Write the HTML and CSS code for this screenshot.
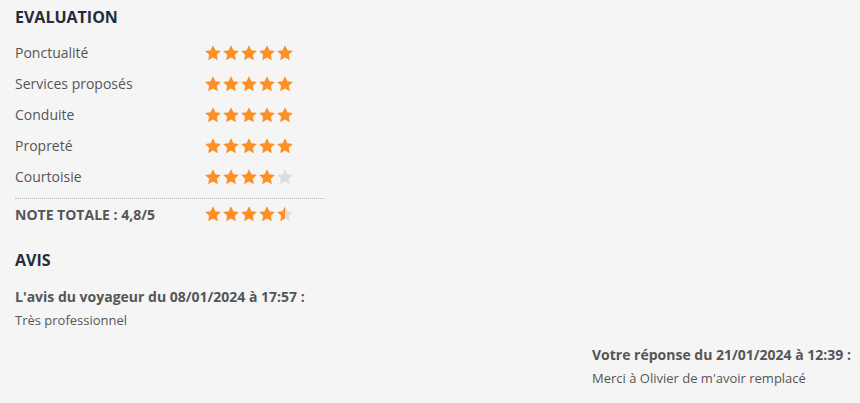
FILE: index.html
```html
<!DOCTYPE html>
<html lang="fr">
<head>
    <meta charset="UTF-8">
    <meta name="viewport" content="width=device-width, initial-scale=1.0">
    <title>Evaluation</title>
    <link rel="stylesheet" href="styles.css">
</head>
<body>

<svg width="0" height="0" class="defs">
    <defs>
        <linearGradient id="half">
            <stop offset="50%" stop-color="#fc8f25"/>
            <stop offset="50%" stop-color="#dddddd"/>
        </linearGradient>
        <symbol id="star" viewBox="0 0 24 24">
            <polygon points="12,1.5 15.2,8.3 22.5,9.2 17.1,14.2 18.5,21.6 12,18 5.5,21.6 6.9,14.2 1.5,9.2 8.8,8.3"/>
        </symbol>
    </defs>
</svg>

<div class="container">
    <h2>EVALUATION</h2>

    <div class="rating-table">
        <div class="rating-row">
            <span class="label">Ponctualité</span>
            <span class="stars">
                <svg class="on"><use href="#star"/></svg><svg class="on"><use href="#star"/></svg><svg class="on"><use href="#star"/></svg><svg class="on"><use href="#star"/></svg><svg class="on"><use href="#star"/></svg>
            </span>
        </div>
        <div class="rating-row">
            <span class="label">Services proposés</span>
            <span class="stars">
                <svg class="on"><use href="#star"/></svg><svg class="on"><use href="#star"/></svg><svg class="on"><use href="#star"/></svg><svg class="on"><use href="#star"/></svg><svg class="on"><use href="#star"/></svg>
            </span>
        </div>
        <div class="rating-row">
            <span class="label">Conduite</span>
            <span class="stars">
                <svg class="on"><use href="#star"/></svg><svg class="on"><use href="#star"/></svg><svg class="on"><use href="#star"/></svg><svg class="on"><use href="#star"/></svg><svg class="on"><use href="#star"/></svg>
            </span>
        </div>
        <div class="rating-row">
            <span class="label">Propreté</span>
            <span class="stars">
                <svg class="on"><use href="#star"/></svg><svg class="on"><use href="#star"/></svg><svg class="on"><use href="#star"/></svg><svg class="on"><use href="#star"/></svg><svg class="on"><use href="#star"/></svg>
            </span>
        </div>
        <div class="rating-row last">
            <span class="label">Courtoisie</span>
            <span class="stars">
                <svg class="on"><use href="#star"/></svg><svg class="on"><use href="#star"/></svg><svg class="on"><use href="#star"/></svg><svg class="on"><use href="#star"/></svg><svg class="off"><use href="#star"/></svg>
            </span>
        </div>
        <div class="rating-row total">
            <span class="label">NOTE TOTALE : 4,8/5</span>
            <span class="stars">
                <svg class="on"><use href="#star"/></svg><svg class="on"><use href="#star"/></svg><svg class="on"><use href="#star"/></svg><svg class="on"><use href="#star"/></svg><svg class="half"><use href="#star"/></svg>
            </span>
        </div>
    </div>

    <h2 class="avis-title">AVIS</h2>

    <div class="review">
        <h4>L'avis du voyageur du 08/01/2024 à 17:57 :</h4>
        <p>Très professionnel</p>
    </div>

    <div class="reply-wrap">
        <div class="review reply">
            <h4>Votre réponse du 21/01/2024 à 12:39 :</h4>
            <p>Merci à Olivier de m'avoir remplacé</p>
        </div>
    </div>
</div>

</body>
</html>
```

FILE: styles.css
```css
body {
    font-family: "Open Sans", Arial, sans-serif;
    margin: 0;
    padding: 0;
    background-color: #f5f5f5;
    color: #555;
}
.defs {
    position: absolute;
}
.container {
    padding: 0 9px 0 15px;
}
h2 {
    font-size: 16px;
    line-height: 20px;
    font-weight: 700;
    color: #232d3b;
    margin: 7px 0 0;
}
.rating-table {
    width: 310px;
    margin-top: 10px;
}
.rating-row {
    display: flex;
    align-items: center;
    height: 31px;
    font-size: 14px;
}
.rating-row .label {
    width: 190px;
}
.rating-row.last {
    height: 31px;
    padding-bottom: 6px;
    border-bottom: 1px dotted #bbb;
}
.rating-row.total {
    height: 30px;
    font-weight: 700;
}
.stars {
    display: flex;
    margin-left: -1px;
}
.stars svg {
    width: 18px;
    height: 18px;
}
.stars .on {
    fill: #fc8f25;
}
.stars .off {
    fill: #dddddd;
}
.stars .half {
    fill: url(#half);
}
.avis-title {
    margin-top: 21px;
}
.review h4 {
    font-size: 14px;
    line-height: 20px;
    font-weight: 700;
    margin: 17px 0 0;
}
.review p {
    font-size: 13px;
    line-height: 18px;
    margin: 4px 0 0;
}
.reply-wrap {
    display: flex;
    justify-content: flex-end;
}
.reply h4 {
    margin-top: 16px;
}
```
